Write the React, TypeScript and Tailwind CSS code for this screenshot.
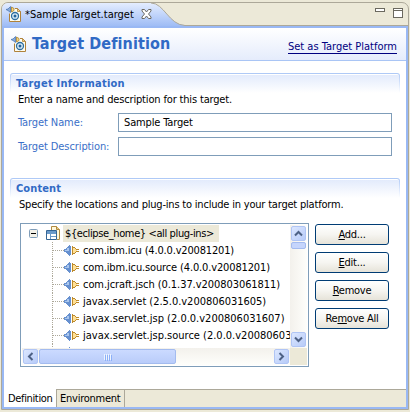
import type { ReactNode } from 'react';

function TargetIcon() {
  return (
    <svg width="16" height="16" viewBox="0 0 16 16" className="block shrink-0">
      <path d="M3.500 7V15.500H14.500V5.500L11.500 2.500H9" fill="#fffdf0" />
      <path d="M3.500 7.500V15.500H14.500V5.500L11.500 2.500H9" fill="none" stroke="#b0823a" />
      <path d="M11.500 2.500V5.500H14.500Z" fill="#f5d583" stroke="#b0823a" strokeWidth=".8" />
      <path d="M0 3.500L2 3L4.500 .5V6.500L2 4.500Z" fill="#87a9d8" stroke="#4c7ab7" strokeWidth=".8" />
      <path d="M5.500 1L8 2.500V4.500L5.500 6Z" fill="#f6d57f" stroke="#a8832d" strokeWidth=".8" />
      <circle cx="9" cy="10" r="3.500" fill="#dceefa" stroke="#2d6ea0" strokeWidth="1.300" />
      <circle cx="9" cy="10" r="1.500" fill="#246298" />
    </svg>
  );
}

function PluginIcon() {
  return (
    <svg width="16" height="11" viewBox="0 0 16 11" className="block shrink-0">
      <path d="M0 4H2V3H3V2H4V1H5V0H6V1H7V10H6V11H5V10H4V9H3V8H2V7H0Z" fill="#6690cf" />
      <path d="M1 5H3V3H5V6H1Z" fill="#a9c6ee" />
      <path d="M8 1H9V2H11V3H12V4H15V5H13V6H15V7H12V8H11V9H9V10H8Z" fill="#bd8a2a" />
      <path d="M9 3H11V4H12V5H13V6H12V7H11V8H9Z" fill="#ffe096" />
    </svg>
  );
}

function LocationIcon() {
  return (
    <svg width="15" height="15" viewBox="0 0 15 15" className="block">
      <path d="M5.500 4V.5H10.500L13.500 3.500V13.500H11" fill="#fff8dc" stroke="#b08b43" />
      <path d="M10.500 .5V3.500H13.500" fill="#f1cf7c" stroke="#b08b43" />
      <path d="M.5 4.500H10.500V13.500H.5Z" fill="#fff" stroke="#356594" />
      <path d="M1 5H10V7H1Z" fill="#6a9aca" />
      <path d="M1 7.500H10M4.500 8V13M5 10.500H10" stroke="#6a9aca" />
    </svg>
  );
}

function Section({ title, info, className, infoClass, titleClass, children }: {
  title: string; info: string; className: string; infoClass: string; titleClass: string; children: ReactNode;
}) {
  return (
    <section className={`mx-[6px] flex flex-col ${className}`}>
      <div className="h-[20px] rounded-t-[3px] bg-gradient-to-b from-[#adc8f6] to-white pt-px px-px">
        <div className="h-[19px] rounded-t-[2px] border-t border-white bg-gradient-to-b from-[#e3ebfc] to-white pl-[5px] font-bold leading-[17px] text-[#316ac5]">
          <span className={titleClass}>{title}</span>
        </div>
      </div>
      <p className={`h-[14px] whitespace-nowrap leading-[14px] ${infoClass}`}>{info}</p>
      {children}
    </section>
  );
}

function Field({ label, value }: { label: string; value: string }) {
  return (
    <label className="flex h-[19px]">
      <span className="w-[108px] shrink-0 pl-[8px] leading-[19px] tracking-[-0.1px] text-[#3a6fc8]">{label}</span>
      <span className="w-[274px] border border-[#7f9db9] bg-white pl-[5px] leading-[18px] tracking-[-0.15px]">{value}</span>
    </label>
  );
}

function PushButton({ children }: { children: ReactNode }) {
  return (
    <button className="flex h-[21px] w-[74px] items-center justify-center rounded-[3px] border border-[#003c74] bg-gradient-to-b from-white via-[#f6f5f1] to-[#e6e3d9] leading-[14px] tracking-[-0.25px]">
      <span>{children}</span>
    </button>
  );
}

function ScrollButton({ path }: { path: string }) {
  return (
    <div className="size-[17px] shrink-0 p-px">
      <div className="flex size-[15px] items-center justify-center rounded-[2px] border border-[#b0c5f5] bg-gradient-to-br from-[#dce7ff] to-[#b7cbf8]">
        <svg width="9" height="9" viewBox="0 0 9 9">
          <path d={path} fill="none" stroke="#4d6185" strokeWidth="2" />
        </svg>
      </div>
    </div>
  );
}

const plugins = [
  { name: 'com.ibm.icu (4.0.0.v20081201)', spacing: 'tracking-[-0.17px]' },
  { name: 'com.ibm.icu.source (4.0.0.v20081201)', spacing: 'tracking-[-0.14px]' },
  { name: 'com.jcraft.jsch (0.1.37.v200803061811)', spacing: 'tracking-[-0.06px]' },
  { name: 'javax.servlet (2.5.0.v200806031605)', spacing: 'tracking-[-0.03px]' },
  { name: 'javax.servlet.jsp (2.0.0.v200806031607)', spacing: 'tracking-[0px]' },
  { name: 'javax.servlet.jsp.source (2.0.0.v200806031607)', spacing: 'tracking-[0px]' },
];

function Tree() {
  return (
    <div className="flex h-[144px] w-[289px] flex-col border border-[#7f9db9] bg-white p-px">
      <div className="flex h-[123px]">
        <div className="flex w-[268px] flex-col overflow-hidden whitespace-nowrap">
          <div className="flex h-[17px] shrink-0 items-center">
            <svg width="9" height="9" viewBox="0 0 9 9" className="ml-[7px]">
              <rect x=".5" y=".5" width="8" height="8" rx="1" fill="#f3f1e8" stroke="#7f9db9" />
              <path d="M2 4.500H7" stroke="#000" />
            </svg>
            <div className="ml-[8px]"><LocationIcon /></div>
            <span className="ml-[2px] h-[17px] w-[156px] bg-[#ece9d8] pl-[2px] leading-[18px] tracking-[-0.38px]">{'${eclipse_home} <all plug-ins>'}</span>
          </div>
          {plugins.map(({ name, spacing }) => (
            <div key={name} className="ml-[30px] flex h-[17px] shrink-0 items-center border-l border-dotted border-[#aca899]">
              <span className="w-[11px] shrink-0 border-t border-dotted border-[#aca899]" />
              <PluginIcon />
              <span className={`ml-[3px] leading-[17px] ${spacing}`}>{name}</span>
            </div>
          ))}
          <div className="ml-[30px] flex h-[17px] shrink-0 items-center border-l border-dotted border-[#aca899] pl-[11px]"><PluginIcon /></div>
        </div>
        <div className="flex w-[17px] flex-col bg-gradient-to-r from-[#f3f1ec] to-[#fefefb]">
          <ScrollButton path="M1 6.500L4.500 3L8 6.500" />
          <div className="mx-px h-[7px] rounded-[2px] border border-[#a3bbef] bg-[#c5d5fc]" />
          <div className="flex-1" />
          <ScrollButton path="M1 2.500L4.500 6L8 2.500" />
        </div>
      </div>
      <div className="flex h-[17px]">
        <div className="flex w-[268px] bg-gradient-to-b from-[#f3f1ec] to-[#fefefb]">
          <ScrollButton path="M6.500 1L3 4.500L6.500 8" />
          <div className="mt-px flex h-[15px] w-[137px] items-center justify-center gap-px rounded-[2px] border border-[#a3bbef] bg-gradient-to-b from-[#cbdaff] to-[#b9ccfa]">
            {[0, 1, 2, 3].map((i) => <span key={i} className="h-[6px] w-px bg-[#eef4fe] shadow-[1px_1px_0_#8cb0f8]" />)}
          </div>
          <div className="flex-1" />
          <ScrollButton path="M2.500 1L6 4.500L2.500 8" />
        </div>
        <div className="w-[17px] bg-[#ece9d8]" />
      </div>
    </div>
  );
}

export default function App() {
  return (
    <main className="h-[412px] w-[410px] overflow-hidden bg-[#ece9d8] pl-px pt-[2px] font-['DejaVu_Sans_Condensed','DejaVu_Sans',sans-serif] text-[11px] text-black">
      <div className="flex h-[408px] w-[408px] flex-col overflow-hidden rounded-t-[7px] border border-[#aca899]">
        <div className="relative h-[25px] shrink-0">
          <svg width="406" height="25" viewBox="0 0 406 25" className="absolute inset-0">
            <defs>
              <linearGradient id="tab" x1="0" x2="0" y1="0" y2="1">
                <stop stopColor="#e4edff" />
                <stop offset="1" stopColor="#99b8f4" />
              </linearGradient>
            </defs>
            <path d="M0 0H149C162 0 167 22 183 22H406V25H0Z" fill="url(#tab)" />
            <path d="M183 23H406V25H0V23Z" fill="#99b8f4" />
            <path d="M149 0C162 0 167 22 183 22.500H406" fill="none" stroke="#aca899" />
          </svg>
          <div className="relative flex h-[22px] items-center">
            <div className="ml-[4px] -mt-[1px]"><TargetIcon /></div>
            <span className="ml-[3px] w-[110px] whitespace-nowrap pt-px leading-[14px]">*Sample Target.target</span>
            <svg width="11" height="10" viewBox="0 0 11 10" className="ml-[6px]">
              <path d="M1 .5H3.500L5.500 3L7.500 .5H10V2L7.500 5L10 8V9.500H7.500L5.500 7L3.500 9.500H1V8L3.500 5L1 2Z" fill="#fff" stroke="#6c6a63" />
            </svg>
            <svg width="29" height="11" viewBox="0 0 29 11" className="ml-auto mr-[4px] -mt-[2px]" shapeRendering="crispEdges">
              <path d="M.5 .5H9.500V3.500H.5ZM18.500 .5H27.500V9.500H18.500ZM18.500 2.500H27.500" fill="#fff" stroke="#6b695f" />
            </svg>
          </div>
        </div>
        <div className="flex flex-1 flex-col border-x-2 border-b-2 border-[#99b8f4] bg-white">
          <header className="flex h-[33px] shrink-0 items-center border-b border-[#a9c5f5] bg-gradient-to-b from-white to-[#e5ecfc] pl-[7px] pr-[9px]">
            <TargetIcon />
            <h1 className="ml-[5px] whitespace-nowrap text-[16px] font-bold leading-[20px] tracking-[0.1px] text-[#316ac5]">Target Definition</h1>
            <a className="ml-auto mt-[5px] h-[14px] whitespace-nowrap border-b border-[#000080] leading-[14px] text-[#000080]">Set as Target Platform</a>
          </header>
          <Section title="Target Information" info="Enter a name and description for this target." className="mt-[12px]" titleClass="tracking-[0.24px]" infoClass="pl-[8px] tracking-[-0.16px]">
            <div className="mt-[6px] flex flex-col gap-[5px]">
              <Field label="Target Name:" value="Sample Target" />
              <Field label="Target Description:" value="" />
            </div>
          </Section>
          <Section title="Content" info="Specify the locations and plug-ins to include in your target platform." className="mt-[22px]" titleClass="tracking-[0.1px]" infoClass="pl-[9px] tracking-[-0.2px]">
            <div className="mt-[11px] flex pl-[10px]">
              <Tree />
              <div className="ml-[6px] mt-px flex flex-col gap-[7px]">
                <PushButton><u>A</u>dd...</PushButton>
                <PushButton><u>E</u>dit...</PushButton>
                <PushButton><u>R</u>emove</PushButton>
                <PushButton>Re<u>m</u>ove All</PushButton>
              </div>
            </div>
          </Section>
          <nav className="mt-auto flex h-[18px] border-t border-[#aca899] bg-[#ece9d8] leading-[17px]">
            <span className="-mt-px w-[53px] border-r border-[#aca899] bg-white pl-[4px] pt-px tracking-[-0.35px]">Definition</span>
            <span className="w-[68px] border-r border-[#aca899] pl-[3px] tracking-[-0.25px]">Environment</span>
          </nav>
        </div>
      </div>
    </main>
  );
}
